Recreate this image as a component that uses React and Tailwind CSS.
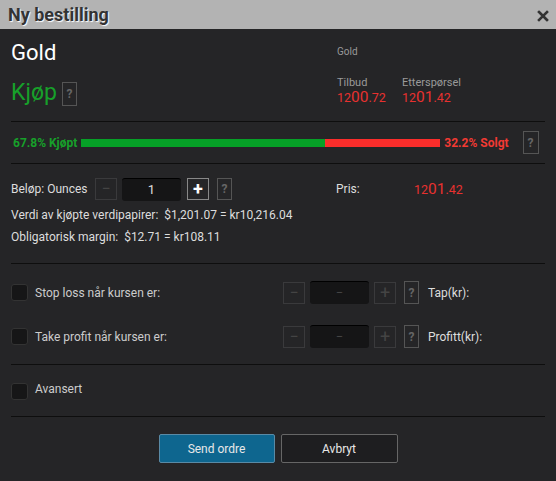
import React from "react";

function Price({ a, b, c, className = "" }) {
  return (
    <span className={"text-[#e8312f] leading-[15px] " + className}>
      <span className="text-[12.5px]">{a}</span>
      <span className="text-[15.5px]">{b}</span>
      <span className="text-[12.5px]">{c}</span>
    </span>
  );
}

function Q({ className = "" }) {
  return (
    <div className={"flex items-center justify-center border border-[#555] text-[#666] font-bold text-[12px] " + className}>?</div>
  );
}

function Stepper({ value, active }) {
  return (
    <div className="flex items-center">
      <div className="w-[22px] h-[22px] border border-[#3a3a3c] flex items-center justify-center text-[#444] text-[16px] leading-none">−</div>
      <div className={"ml-[5px] w-[59px] h-[23px] rounded-[3px] border-t border-[#000] bg-[#151516] flex items-center justify-center text-[13px] " + (active ? "text-[#ddd]" : "text-[#444]")}>{value}</div>
      <div className={"w-[22px] h-[22px] border flex items-center justify-center text-[18px] leading-none " + (active ? "border-[#888] text-white font-bold ml-[6px]" : "border-[#3a3a3c] text-[#444] ml-[5px]")}>+</div>
    </div>
  );
}

export default function App() {
  return (
    <div className="w-[556px] h-[481px] bg-[#252527] font-['Roboto',sans-serif] text-[#ddd] flex flex-col overflow-hidden">
      <div className="h-[29px] bg-[#b3b3b3] flex items-center justify-between pl-[8px] pr-[7px] shrink-0">
        <span className="text-[18px] font-bold text-[#333] [text-shadow:1px_1px_1px_#fff]">Ny bestilling</span>
        <svg width="12" height="12" viewBox="0 0 12 12" className="mt-[2px]">
          <path d="M2 2 L10 10 M10 2 L2 10" stroke="#333" strokeWidth="2.6" strokeLinecap="square" />
        </svg>
      </div>
      <div className="flex flex-col px-[11px]">
        <div className="flex h-[92px]">
          <div className="w-[326px] flex flex-col">
            <div className="text-[22px] text-white mt-[11px] leading-[26px]">Gold</div>
            <div className="flex items-center mt-[14px]">
              <span className="text-[23px] text-[#17a02a] leading-[26px]">Kjøp</span>
              <Q className="ml-[5px] w-[15px] h-[24px] mt-[1px]" />
            </div>
          </div>
          <div className="flex flex-col">
            <div className="text-[10px] text-[#999] mt-[15px]">Gold</div>
            <div className="flex mt-[18px]">
              <div className="w-[65px] flex flex-col">
                <span className="text-[11px] text-[#9a9a9a] leading-[12px]">Tilbud</span>
                <Price a="12" b="00" c=".72" />
              </div>
              <div className="flex flex-col">
                <span className="text-[11px] text-[#9a9a9a] leading-[12px]">Etterspørsel</span>
                <Price a="12" b="01" c=".42" />
              </div>
            </div>
          </div>
        </div>
        <div className="h-px bg-[#0e0e0e]" />
        <div className="flex items-center h-[41px] pl-[2px]">
          <span className="text-[12px] font-bold text-[#17a02a] whitespace-nowrap">67.8% Kjøpt</span>
          <div className="ml-[4px] flex h-[8px] w-[359px]">
            <div className="h-full bg-[#06a027]" style={{ width: "68%" }} />
            <div className="h-full bg-[#fb2d2b] flex-1" />
          </div>
          <span className="ml-[4px] text-[12px] font-bold text-[#f23a33] whitespace-nowrap">32.2% Solgt</span>
          <Q className="ml-[14px] w-[16px] h-[23px]" />
        </div>
        <div className="h-px bg-[#0e0e0e]" />
        <div className="flex items-center mt-[13px] h-[24px]">
          <span className="text-[12px] text-[#ddd] w-[84px]">Beløp: Ounces</span>
          <Stepper value="1" active />
          <Q className="ml-[8px] w-[15px] h-[22px]" />
          <span className="ml-[104px] text-[12px] text-[#ddd] w-[78px]">Pris:</span>
          <Price a="12" b="01" c=".42" />
        </div>
        <div className="text-[12px] text-[#ddd] mt-[5px] leading-[18px]">Verdi av kjøpte verdipapirer:&nbsp; $1,201.07 = kr10,216.04</div>
        <div className="text-[12px] text-[#ddd] mt-[4px] leading-[18px]">Obligatorisk margin:&nbsp; $12.71 = kr108.11</div>
        <div className="h-px bg-[#0e0e0e] mt-[17px]" />
        {[
          ["Stop loss når kursen er:", "Tap(kr):", "mt-[17px]"],
          ["Take profit når kursen er:", "Profitt(kr):", "mt-[21px]"],
        ].map(([l, r, m]) => (
          <div key={l} className={"flex items-center h-[23px] " + m}>
            <div className="w-[17px] h-[17px] rounded-[3px] bg-[#161617] border border-[#333]" />
            <span className="ml-[7px] w-[248px] text-[12px] text-[#ccc]">{l}</span>
            <Stepper value="−" />
            <Q className="ml-[8px] w-[15px] h-[23px]" />
            <span className="ml-[9px] text-[12px] text-[#ddd]">{r}</span>
          </div>
        ))}
        <div className="h-px bg-[#0e0e0e] mt-[16px]" />
        <div className="flex items-center mt-[17px] h-[18px]">
          <div className="w-[17px] h-[17px] rounded-[3px] bg-[#161617] border border-[#333]" />
          <span className="ml-[7px] text-[12px] text-[#ccc] -mt-[4px]">Avansert</span>
        </div>
        <div className="h-px bg-[#0e0e0e] mt-[16px]" />
        <div className="flex justify-center gap-[6px] mt-[17px]">
          <button className="w-[116px] h-[29px] bg-[#0e668f] border border-[#5a8aa5] rounded-[2px] text-[12px] text-[#e8e8e8]">Send ordre</button>
          <button className="w-[117px] h-[29px] bg-[#1e1e20] border border-[#666] rounded-[2px] text-[12px] text-[#e8e8e8]">Avbryt</button>
        </div>
      </div>
    </div>
  );
}
